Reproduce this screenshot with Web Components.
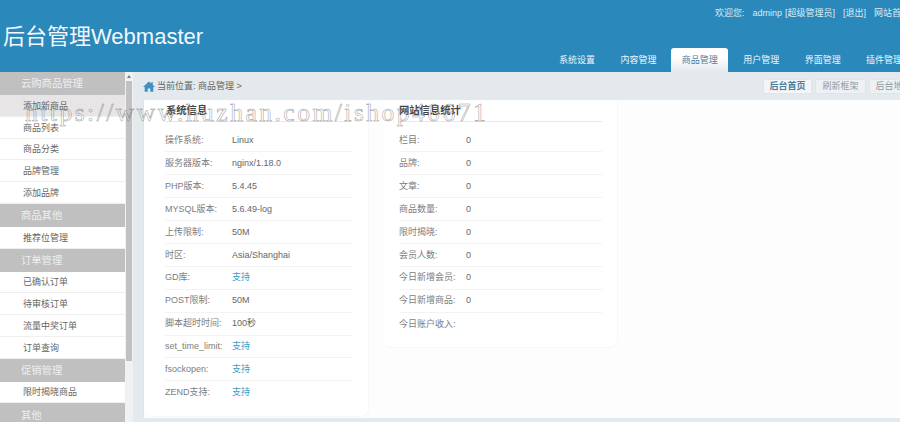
<!DOCTYPE html>
<html lang="zh"><head><meta charset="utf-8"><title>后台管理</title>
<style>
html,body{margin:0;height:422px;overflow:hidden;background:#fff}
body{font:9px/1.2 "Liberation Sans","Noto Sans CJK SC",sans-serif;color:#666;position:relative;display:flex;flex-direction:column}
.body{display:flex;flex:1;min-height:0}
.sidebar{display:flex;width:125px;flex:none;flex-direction:column;overflow:hidden}
.main{flex:1;min-width:0;display:flex;flex-direction:column;background:#e3e9ec;overflow:hidden}
.content{flex:none;height:318px;margin-left:10px;background:#fdfdfd;display:flex;gap:15px;align-items:flex-start;border-left:1px solid #d5e6ee}
</style></head><body>
<x-header></x-header>
<div class="body">
<nav class="sidebar">
<x-side-group>云购商品管理</x-side-group>
<x-side-item first>添加新商品</x-side-item><x-side-item>商品列表</x-side-item><x-side-item>商品分类</x-side-item><x-side-item>品牌管理</x-side-item><x-side-item>添加品牌</x-side-item>
<x-side-group>商品其他</x-side-group>
<x-side-item>推荐位管理</x-side-item>
<x-side-group>订单管理</x-side-group>
<x-side-item>已确认订单</x-side-item><x-side-item>待审核订单</x-side-item><x-side-item>流量中奖订单</x-side-item><x-side-item>订单查询</x-side-item>
<x-side-group>促销管理</x-side-group>
<x-side-item>限时揭晓商品</x-side-item>
<x-side-group>其他</x-side-group>
</nav>
<x-scrollbar></x-scrollbar>
<div class="main">
<x-crumbs></x-crumbs>
<div class="content">
<x-card title="系统信息" style="--w:225px;--pl:21px;--pr:16px;--h:317px;--hp:1px">
<x-row label="操作系统:">Linux</x-row><x-row label="服务器版本:">nginx/1.18.0</x-row><x-row label="PHP版本:">5.4.45</x-row><x-row label="MYSQL版本:">5.6.49-log</x-row><x-row label="上传限制:">50M</x-row><x-row label="时区:">Asia/Shanghai</x-row><x-row label="GD库:" link>支持</x-row><x-row label="POST限制:">50M</x-row><x-row label="脚本超时时间:">100秒</x-row><x-row label="set_time_limit:" link>支持</x-row><x-row label="fsockopen:" link>支持</x-row><x-row label="ZEND支持:" link last>支持</x-row>
</x-card>
<x-card title="网站信息统计" style="--w:234px;--pl:15px;--pr:15px;--h:248px;--hp:0px">
<x-row label="栏目:">0</x-row><x-row label="品牌:">0</x-row><x-row label="文章:">0</x-row><x-row label="商品数量:">0</x-row><x-row label="限时揭晓:">0</x-row><x-row label="会员人数:">0</x-row><x-row label="今日新增会员:">0</x-row><x-row label="今日新增商品:">0</x-row><x-row label="今日账户收入:" last></x-row>
</x-card>
</div>
</div>
</div>
<x-watermark>https://www.huzhan.com/ishop40671</x-watermark>
<script>
function def(name,css,html){
  customElements.define(name,class extends HTMLElement{
    connectedCallback(){
      if(this.shadowRoot)return;
      const r=this.attachShadow({mode:'open'});
      r.innerHTML='<style>'+css+'</style>'+(typeof html==='function'?html(this):html);
    }
  });
}
def('x-tab',`:host{display:flex;align-items:center;justify-content:center;flex:none;width:57px;height:24.5px;padding-top:2px;box-sizing:border-box;margin-right:4.4px;color:#eef6fa;border-radius:3px 3px 0 0}
:host([active]){background:linear-gradient(#fff 40%,#e3e9ec);color:#4d7f9b}`,'<slot></slot>');
def('x-header',`:host{display:block;flex:none;height:72px;background:#2a88bb;color:#fff;overflow:hidden}
.top{display:flex;white-space:nowrap;height:26px;padding-top:1px;box-sizing:border-box;align-items:center;color:#dcecf5;padding-left:715px}
.top span{flex:none;margin-right:8px}
.mid{display:flex;height:46px}
h1{font-size:22px;font-weight:400;margin:-1px 0 0 3px;padding:0;width:545.6px;height:24px;line-height:24px;color:#f2f8fb;white-space:nowrap;flex:none}
.tabs{display:flex;align-self:flex-end;flex:none}`,
`<div class="top"><span>欢迎您:</span><span style="margin-right:3px">adminp</span><span>[超级管理员]</span><span>[退出]</span><span>网站首页</span></div>
<div class="mid"><h1>后台管理Webmaster</h1><div class="tabs"><x-tab>系统设置</x-tab><x-tab>内容管理</x-tab><x-tab active>商品管理</x-tab><x-tab>用户管理</x-tab><x-tab>界面管理</x-tab><x-tab>插件管理</x-tab></div></div>`);
def('x-side-group',`:host{display:flex;align-items:center;flex:none;height:23px;padding-top:2px;background:#c0c0c0;color:#efefef;padding-left:21px;font-size:10.3px;box-sizing:border-box}`,'<slot></slot>');
def('x-side-item',`:host{display:flex;align-items:center;flex:none;height:21.75px;padding-top:2px;background:#fff;color:#666;padding-left:23px;border-bottom:1px solid #efefef;box-sizing:border-box}
:host([first]){background:#e7e5e6}`,'<slot></slot>');
def('x-scrollbar',`:host{display:flex;flex-direction:column;align-items:stretch;flex:none;width:8px;background:#f1f1f1}
.up{height:9px;display:flex;align-items:center;justify-content:center}
.up i{border:2.5px solid transparent;border-top:0;border-bottom:3px solid #777}
.th{height:280px;margin:0 1px;background:#c1c1c1}`,'<div class="up"><i></i></div><div class="th"></div>');
def('x-btn',`:host{display:flex;align-items:center;justify-content:center;flex:none;width:49px;height:15px;background:#eef1f3;border:1px solid #dfe5e8;color:#8a9aa4;box-sizing:border-box;border-radius:1px;white-space:nowrap}
:host([on]){color:#4a7f9f;font-weight:700;background:#f3f5f6}`,'<slot></slot>');
def('x-crumbs',`:host{display:flex;align-items:center;flex:none;height:28px;padding-left:10px;color:#666;white-space:nowrap;overflow:hidden}
svg{width:12px;height:11px;flex:none;margin-right:2px}
.bt{display:flex;gap:3px;margin-left:auto;margin-right:-18px;flex:none}`,
`<svg viewBox="0 0 12 11"><path fill="#3f8fc4" d="M6 .5 0 6h1.7v4.8h3V7.4h2.6v3.4h3V6H12L9.8 4V1.2H8.3v1.4z"/></svg><span>当前位置: 商品管理 &gt;</span><div class="bt"><x-btn on>后台首页</x-btn><x-btn style="width:51px">刷新框架</x-btn><x-btn style="width:49px">后台地图</x-btn></div>`);
def('x-card',`:host{display:block;flex:none;width:var(--w);height:var(--h);padding:0 var(--pr) 0 var(--pl);box-sizing:border-box;background:#fff;border-right:1px solid #f7f7f7;border-bottom:1px solid #f7f7f7;border-radius:0 0 8px 8px}
h2{margin:0 0 8px;height:21.5px;line-height:21px;font-size:10.3px;color:#444;padding-left:var(--hp);border-bottom:1px solid #e6e9ea;box-sizing:border-box;font-weight:700}`,
h=>`<h2>${h.getAttribute('title')}</h2><slot></slot>`);
def('x-row',`:host{display:flex;align-items:center;height:22.9px;box-sizing:border-box;border-bottom:1px solid #f3f3f3;white-space:nowrap}
:host([last]){border-bottom:0}
.l{width:67px;flex:none;color:#7d7d7d}
.v{color:#666}
:host([link]) .v{color:#3a9cc8}`,
h=>`<span class="l">${h.getAttribute('label')}</span><span class="v"><slot></slot></span>`);
def('x-watermark',`:host{position:absolute;left:25px;top:98px;font:25.5px/30px "Liberation Serif",serif;letter-spacing:2.5px;color:rgba(255,255,255,.12);-webkit-text-stroke:.5px rgba(110,110,110,.75);white-space:nowrap;pointer-events:none}`,'<slot></slot>');
</script>
</body></html>
